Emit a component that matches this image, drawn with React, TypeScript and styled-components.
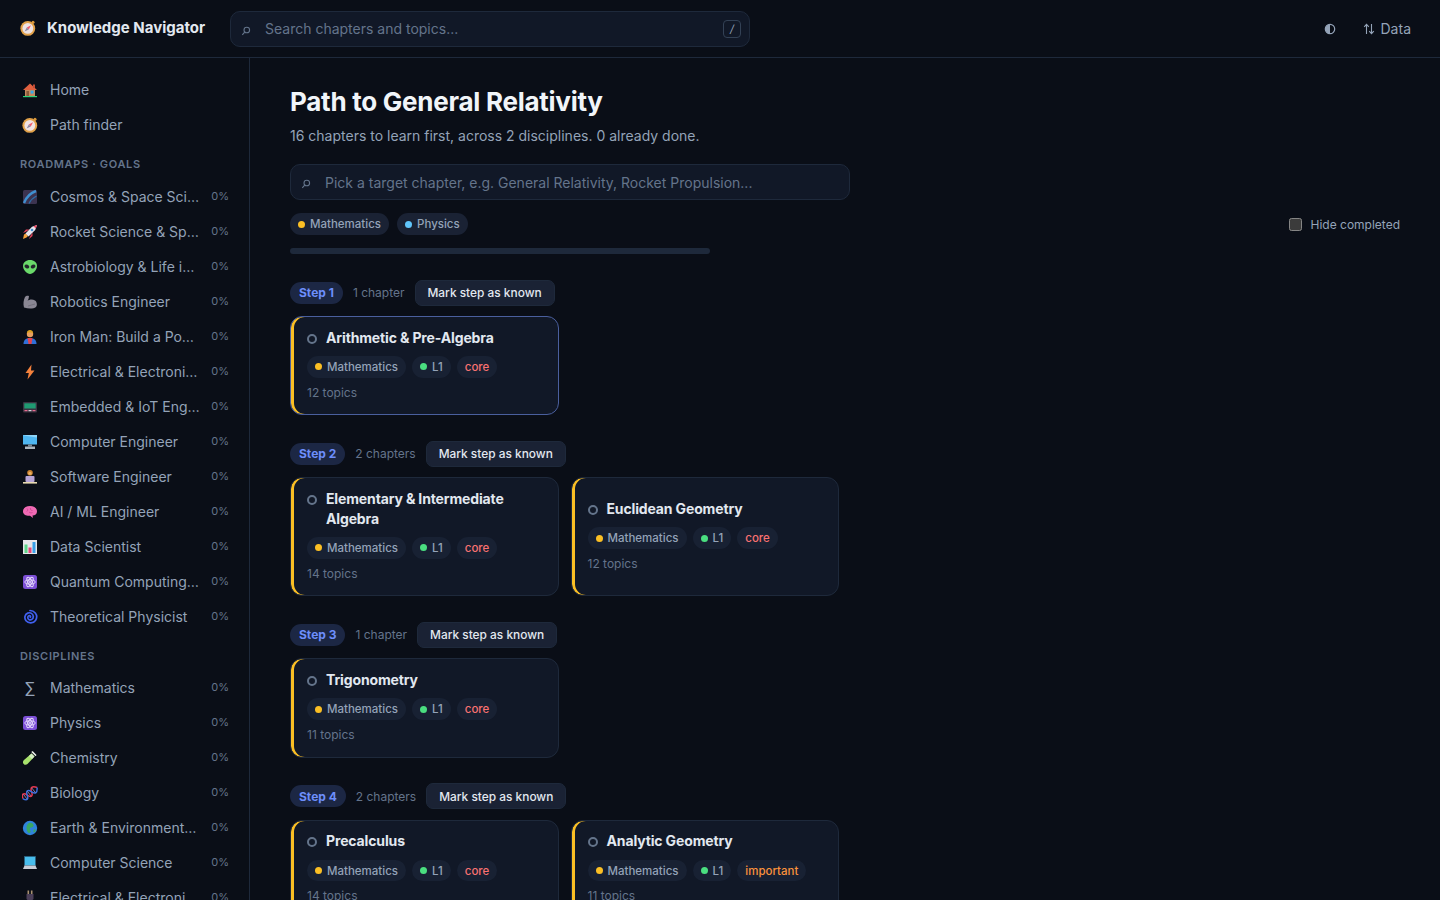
import type { ReactNode } from 'react'
import styled, { createGlobalStyle } from 'styled-components'

const Global = createGlobalStyle`
  * { box-sizing: border-box; }
  html, body { margin: 0; height: 100%; overflow: hidden; background: #0a0e17; }
  body { font-family: Inter, "Noto Sans", sans-serif; color: #e2e8f0; }
  #root { height: 100%; }
`

const Shell = styled.div`
  height: 100vh;
  display: flex;
  flex-direction: column;
  overflow: hidden;
`

const TopBar = styled.header`
  height: 58px;
  flex: none;
  display: flex;
  align-items: center;
  padding: 0 20px;
  border-bottom: 1px solid #1e293b;
`

const Brand = styled.div`
  width: 210px;
  flex: none;
  display: flex;
  align-items: center;
  gap: 11px;
  padding-bottom: 2px;
  font-size: 15px;
  font-weight: 700;
  color: #e2e8f0;
  white-space: nowrap;
`

const SearchBox = styled.label<{ $width: number }>`
  width: ${({ $width }) => $width}px;
  height: 36px;
  display: flex;
  align-items: center;
  padding: 0 8px 0 10px;
  gap: 14px;
  background: #111827;
  border: 1px solid #1e293b;
  border-radius: 10px;
`

const SearchGlyph = styled.svg`
  width: 10px;
  height: 12px;
  flex: none;
  position: relative;
  top: 2px;
`

const SearchInput = styled.input`
  flex: 1;
  min-width: 0;
  padding: 0;
  border: 0;
  outline: 0;
  background: transparent;
  font: 400 14px Inter, sans-serif;
  color: #e2e8f0;
  &::placeholder { color: #64748b; opacity: 1; }
`

const Kbd = styled.span`
  width: 18px;
  height: 18px;
  display: flex;
  align-items: center;
  justify-content: center;
  border: 1px solid #334155;
  border-radius: 4px;
  font-size: 11px;
  color: #94a3b8;
  font-style: italic;
`

const TopActions = styled.div`
  margin-left: auto;
  display: flex;
  align-items: center;
  gap: 27px;
  padding-right: 9px;
  color: #94a3b8;
  font-size: 14px;
`

const Action = styled.span`
  display: flex;
  align-items: center;
  gap: 6px;
`

const Body = styled.div`
  flex: 1;
  min-height: 0;
  display: flex;
`

const Sidebar = styled.aside`
  width: 250px;
  flex: none;
  padding: 14px 20px 0;
  border-right: 1px solid #1e293b;
  overflow: hidden;
`

const NavItem = styled.div`
  height: 35px;
  display: flex;
  align-items: center;
  font-size: 14px;
  color: #94a3b8;
`

const NavIcon = styled.span`
  width: 20px;
  height: 16px;
  margin-right: 10px;
  flex: none;
  display: flex;
  align-items: center;
  justify-content: center;
  font-size: 16px;
  line-height: 1;
  color: #94a3b8;
`

const NavName = styled.span`
  flex: 1;
  min-width: 0;
  white-space: nowrap;
  overflow: hidden;
  text-overflow: ellipsis;
`

const NavPct = styled.span`
  width: 29px;
  flex: none;
  text-align: right;
  font-size: 11px;
  color: #64748b;
  position: relative;
  top: -1px;
`

const SectionLabel = styled.div<{ $bottom: number }>`
  margin-top: 15px;
  margin-bottom: ${({ $bottom }) => $bottom}px;
  height: 14px;
  line-height: 14px;
  font-size: 11px;
  font-weight: 600;
  letter-spacing: 0.06em;
  color: #64748b;
`

const Main = styled.main`
  flex: 1;
  min-width: 0;
  padding: 27px 40px 0;
  overflow: hidden;
`

const Title = styled.h1`
  margin: 0;
  font-size: 26px;
  line-height: 34px;
  font-weight: 700;
  letter-spacing: -0.01em;
  color: #f1f5f9;
`

const Subtitle = styled.p`
  margin: 7px 0 18px;
  font-size: 14px;
  line-height: 20px;
  color: #94a3b8;
`

const FilterRow = styled.div`
  margin-top: 13px;
  height: 22px;
  display: flex;
  align-items: center;
  gap: 8px;
`

const FilterChip = styled.span`
  height: 22px;
  display: inline-flex;
  align-items: center;
  gap: 5px;
  padding: 0 8px;
  border-radius: 11px;
  background: #1a2234;
  font-size: 11.5px;
  font-weight: 500;
  color: #94a3b8;
`

const Dot = styled.i<{ $color: string }>`
  width: 7px;
  height: 7px;
  border-radius: 50%;
  flex: none;
  background: ${({ $color }) => $color};
`

const HideToggle = styled.label`
  margin-left: auto;
  display: flex;
  align-items: center;
  gap: 8px;
  font-size: 12px;
  color: #94a3b8;
`

const Check = styled.input`
  width: 13px;
  height: 13px;
  margin: 0;
  color-scheme: dark;
`

const Progress = styled.div`
  width: 420px;
  height: 6px;
  margin: 13px 0 25.6px;
  border-radius: 3px;
  background: #1e293b;
`

const StepHead = styled.div`
  height: 26px;
  display: flex;
  align-items: center;
  gap: 10px;
  margin-bottom: 10.4px;
`

const StepPill = styled.span`
  height: 22px;
  display: inline-flex;
  align-items: center;
  padding: 0 9px;
  border-radius: 11px;
  background: #1c2744;
  color: #6d8efb;
  font-size: 12px;
  font-weight: 700;
`

const StepCount = styled.span`
  font-size: 12px;
  color: #64748b;
`

const MarkButton = styled.button`
  height: 26px;
  padding: 0 12px;
  border: 1px solid #1e293b;
  border-radius: 7px;
  background: #1a2234;
  color: #e2e8f0;
  font: 500 11.9px Inter, sans-serif;
`

const CardGrid = styled.div`
  display: grid;
  grid-template-columns: repeat(2, 268.5px);
  gap: 12px;
  margin-bottom: 25.6px;
`

const Card = styled.article<{ $target?: boolean }>`
  display: flex;
  flex-direction: column;
  justify-content: center;
  padding: 10.6px 16px 13.7px;
  border: 1px solid ${({ $target }) => ($target ? '#4a5f9e' : '#1e293b')};
  border-radius: 12px;
  background: #111827;
  box-shadow: inset 3px 0 0 #fbbf24;
`

const CardTitle = styled.div`
  display: flex;
  align-items: flex-start;
  gap: 9px;
  font-size: 14px;
  line-height: 19.6px;
  font-weight: 700;
  letter-spacing: -0.01em;
  color: #e2e8f0;
`

const Ring = styled.i`
  width: 10px;
  height: 10px;
  margin-top: 6px;
  flex: none;
  border-radius: 50%;
  border: 2px solid #64748b;
`

const Tags = styled.div`
  display: flex;
  gap: 6px;
  margin-top: 9px;
`

const Tag = styled.span<{ $color?: string }>`
  height: 21.5px;
  display: inline-flex;
  align-items: center;
  gap: 5px;
  padding: 0 8px;
  border-radius: 11px;
  background: #182133;
  font-size: 11.5px;
  font-weight: 500;
  color: ${({ $color }) => $color ?? '#94a3b8'};
`

const Topics = styled.div`
  margin-top: 7px;
  font-size: 12px;
  line-height: 16px;
  color: #64748b;
`

const Icon = ({ children }: { children: ReactNode }) => (
  <svg width={16} height={16} viewBox="0 0 16 16">
    {children}
  </svg>
)

const atom = (
  <Icon>
    <rect x="1" y="1" width="14" height="14" rx="2.5" fill="#7c4fd6" />
    <g fill="none" stroke="#e6dcfa" strokeWidth="0.9">
      <ellipse cx="8" cy="8" rx="5.2" ry="2.1" />
      <ellipse cx="8" cy="8" rx="5.2" ry="2.1" transform="rotate(60 8 8)" />
      <ellipse cx="8" cy="8" rx="5.2" ry="2.1" transform="rotate(120 8 8)" />
    </g>
    <circle cx="8" cy="8" r="1" fill="#e6dcfa" />
  </Icon>
)

const compass = (
  <Icon>
    <circle cx="13" cy="2.2" r="1.5" fill="#d9973a" />
    <circle cx="7.8" cy="8.4" r="7.4" fill="#e2a24a" />
    <circle cx="7.8" cy="8.4" r="5.4" fill="#efe3e4" />
    <path d="M11 5.2 6.800 7.400 8.800 9.400Z" fill="#ef5a6a" />
    <path d="M4.600 11.600 6.800 7.400 8.800 9.400Z" fill="#8d86a0" />
  </Icon>
)

const emoji: Record<string, ReactNode> = {
  compass,
  atom,
  home: (
    <Icon>
      <path d="M3 7.500h10V14H3Z" fill="#c58a5e" />
      <path d="M8 1.500 15 8H1Z" fill="#e0603f" />
      <rect x="11" y="2.500" width="2" height="3.500" fill="#c04a35" />
      <rect x="8.600" y="8.600" width="3" height="3" fill="#38a9e8" />
      <rect x="4.400" y="9" width="2.600" height="5" fill="#8a5a3a" />
      <rect x="1" y="14" width="14" height="1.200" fill="#2fd37a" />
    </Icon>
  ),
  cosmos: (
    <Icon>
      <rect x="1" y="1" width="14" height="14" rx="1.500" fill="#3c3350" />
      <path d="M2 14C4 9 8 4 14 2" stroke="#3f8fd0" strokeWidth="2.400" fill="none" />
      <path d="M7 14.500c1.500-3 3.500-5.500 7.500-7.500" stroke="#2d6da8" strokeWidth="1.300" fill="none" />
    </Icon>
  ),
  rocket: (
    <Icon>
      <path d="M4 9.500 2 10.500 1 15l3.500-1.500L6 12Z" fill="#f5a23c" />
      <path d="M3.500 8 1 9 4 5.500h3.500Z" fill="#e0435a" />
      <path d="M8 12.500 7 15 10.500 12V8.500Z" fill="#e0435a" />
      <path d="M3.500 9.500 10 2.800 15 1l-1.800 5L6.500 12.500Z" fill="#e9e5ee" />
      <path d="M11.500 2.200 15 1l-1.200 3.500Z" fill="#ef4560" />
      <circle cx="10" cy="6" r="1.300" fill="#3f8fd0" />
    </Icon>
  ),
  alien: (
    <Icon>
      <path d="M8 1c4 0 7 2.500 7 6 0 4-4 8-7 8s-7-4-7-8c0-3.500 3-6 7-6Z" fill="#6ad96a" />
      <ellipse cx="4.900" cy="7.500" rx="2.500" ry="1.800" transform="rotate(25 4.900 7.500)" fill="#23252c" />
      <ellipse cx="11.100" cy="7.500" rx="2.500" ry="1.800" transform="rotate(-25 11.100 7.500)" fill="#23252c" />
    </Icon>
  ),
  muscle: (
    <Icon>
      <path d="M3 3c1-1.200 3-1.500 4-.8L6.500 5 5.500 7c1.500-1.500 5-2 7.500-.5 2 1.300 2.500 5 1 6.500-2.500 2-8 1.800-12 .5C1 10 1.500 6 3 3Z" fill="#8a8794" />
      <path d="M6 12c2-1 5-1 7-2" stroke="#6c6976" strokeWidth="0.800" fill="none" />
    </Icon>
  ),
  hero: (
    <Icon>
      <path d="M1.500 15c0-4 2.500-6 6.500-6s6.500 2 6.500 6Z" fill="#2f6fd8" />
      <path d="M5.500 9h5L9.500 15h-3Z" fill="#e0434f" />
      <circle cx="8" cy="5" r="3.200" fill="#e8a060" />
      <path d="M4.800 4.500C4.800 2 6.500 1 8 1s3.200 1 3.200 3.500L9.500 3.500 6.500 3.500Z" fill="#d9a020" />
    </Icon>
  ),
  bolt: (
    <Icon>
      <path d="M9.500.5 3.500 9h3.300L5.500 15.500 12.500 6.500H9Z" fill="#f4813c" />
    </Icon>
  ),
  pager: (
    <Icon>
      <rect x="1" y="3" width="14" height="10.500" rx="1" fill="#3a3340" />
      <rect x="2.300" y="4.300" width="11.400" height="5.200" fill="#1f9a72" />
      <rect x="2.500" y="11" width="3" height="1.200" fill="#e86a90" />
      <rect x="6.500" y="11" width="3" height="1.200" fill="#d8d4de" />
      <rect x="10.500" y="11" width="3" height="1.200" fill="#e86a90" />
    </Icon>
  ),
  computer: (
    <Icon>
      <rect x="1" y="1" width="14" height="9.500" fill="#4fb6f0" />
      <path d="M1 1h14v2.500L3 1.800Z" fill="#8fd4f7" />
      <rect x="6" y="10.500" width="4" height="2" fill="#7c8894" />
      <rect x="3" y="12.500" width="10" height="2.500" fill="#aab4bc" />
    </Icon>
  ),
  coder: (
    <Icon>
      <circle cx="8" cy="3.800" r="2.800" fill="#c9802f" />
      <circle cx="8" cy="4.300" r="1.600" fill="#eab060" />
      <rect x="3.500" y="7" width="9" height="6" rx="1" fill="#b6a4d6" />
      <rect x="1" y="13" width="14" height="1.600" fill="#e8d9b0" />
    </Icon>
  ),
  brain: (
    <Icon>
      <path d="M1 7.500C1 4 4 2 8 2s7 2 7 5.500c0 2.500-2 4-4.500 4l.5 2.500-3-2.200C4 12 1 10.500 1 7.500Z" fill="#f06ab4" />
      <path d="M5 4.500c1 1 1 2-.2 3M8.500 4c-.5 1.500.5 2.500 2 2.500M7 8c1 1 2.500 1 3.500.5" stroke="#c8408e" strokeWidth="0.800" fill="none" />
    </Icon>
  ),
  chart: (
    <Icon>
      <rect x="1" y="1" width="14" height="14" fill="#e8e6ea" />
      <rect x="2.500" y="5.500" width="3" height="8.500" fill="#5fd58a" />
      <rect x="6.500" y="8.500" width="3" height="5.500" fill="#e8467a" />
      <rect x="10.500" y="3" width="3" height="11" fill="#3aa0e8" />
    </Icon>
  ),
  spiral: (
    <Icon>
      <path
        d="M8.300 8.300c.6-.9-.3-1.900-1.400-1.500-1.500.6-1.500 2.800 0 3.700 2 1.100 4.500-.5 4.400-2.900C11.200 4.700 8.400 3 5.700 4.100 2.700 5.400 2 9.200 4 11.700c2.500 3 7.300 2.800 9.500-.3 1.500-2.200 1.400-5.200-.2-7.300C12 2.400 10 1.500 8 1.500"
        stroke="#4060ee"
        strokeWidth="1.700"
        fill="none"
        strokeLinecap="round"
      />
    </Icon>
  ),
  tube: (
    <Icon>
      <path d="M9.500 3.500 12.500 6.500 5.500 14c-1.200 1-2.800 1-3.800-.1-1-1-1-2.500 0-3.600Z" fill="#a8e26c" />
      <path d="M9.500 3.500 12.500 6.500 10 9 7 6Z" fill="#d6eec4" />
      <rect x="9" y="2.800" width="6" height="1.600" rx="0.600" transform="rotate(45 12 3.600)" fill="#eef2ea" />
    </Icon>
  ),
  dna: (
    <Icon>
      <g transform="rotate(-38 8 8)" fill="none" strokeWidth="1.500">
        <path d="M-1 8C.5 3.500 3 3.500 4.500 8S8.500 12.500 10 8 14 3.500 17 8" stroke="#e8374f" />
        <path d="M-1 8C.5 12.500 3 12.500 4.500 8S8.500 3.500 10 8 14 12.500 17 8" stroke="#3a6fe0" />
        <path d="M2 5v6M7 5v6M12.500 5v6" stroke="#9a8ab8" strokeWidth="0.800" />
      </g>
    </Icon>
  ),
  earth: (
    <Icon>
      <circle cx="8" cy="8" r="7.200" fill="#2f83dc" />
      <path d="M7 3c2-.5 4 .5 4.500 2s-1 2.500-2.500 2.500S7.500 9.500 8.500 11 7 13.500 6 12.500 4.500 9 4.500 7.500 5.500 3.500 7 3Z" fill="#3aa860" />
      <path d="M12 9.500c1-.5 2 0 1.500 1.500s-1.500 1.500-2 1 0-2 .5-2.500Z" fill="#3aa860" />
    </Icon>
  ),
  laptop: (
    <Icon>
      <rect x="2.500" y="1.500" width="11" height="9" fill="#48bdec" stroke="#2a5f80" strokeWidth="0.600" />
      <path d="M2.500 10.500h11L15 14H1Z" fill="#c9cdd6" />
    </Icon>
  ),
  plug: (
    <Icon>
      <rect x="5.500" y="0.500" width="1.600" height="4" fill="#a89070" />
      <rect x="8.900" y="0.500" width="1.600" height="4" fill="#a89070" />
      <path d="M4.500 4h7v5L9.500 11h-3L4.500 9Z" fill="#4b3f58" />
      <rect x="7" y="11" width="2" height="5" fill="#3a3040" />
    </Icon>
  ),
}

const roadmaps = [
  ['cosmos', 'Cosmos & Space Science'],
  ['rocket', 'Rocket Science & Spaceflight'],
  ['alien', 'Astrobiology & Life in the Universe'],
  ['muscle', 'Robotics Engineer'],
  ['hero', 'Iron Man: Build a Powered Suit'],
  ['bolt', 'Electrical & Electronics Engineer'],
  ['pager', 'Embedded & IoT Engineer'],
  ['computer', 'Computer Engineer'],
  ['coder', 'Software Engineer'],
  ['brain', 'AI / ML Engineer'],
  ['chart', 'Data Scientist'],
  ['atom', 'Quantum Computing Engineer'],
  ['spiral', 'Theoretical Physicist'],
]

const disciplines = [
  ['sigma', 'Mathematics'],
  ['atom', 'Physics'],
  ['tube', 'Chemistry'],
  ['dna', 'Biology'],
  ['earth', 'Earth & Environmental Science'],
  ['laptop', 'Computer Science'],
  ['plug', 'Electrical & Electronics'],
]

type Chapter = { title: string; topics: number; weight: 'core' | 'important'; target?: boolean }

const steps: { label: string; count: string; chapters: Chapter[] }[] = [
  { label: 'Step 1', count: '1 chapter', chapters: [{ title: 'Arithmetic & Pre-Algebra', topics: 12, weight: 'core', target: true }] },
  {
    label: 'Step 2',
    count: '2 chapters',
    chapters: [
      { title: 'Elementary & Intermediate Algebra', topics: 14, weight: 'core' },
      { title: 'Euclidean Geometry', topics: 12, weight: 'core' },
    ],
  },
  { label: 'Step 3', count: '1 chapter', chapters: [{ title: 'Trigonometry', topics: 11, weight: 'core' }] },
  {
    label: 'Step 4',
    count: '2 chapters',
    chapters: [
      { title: 'Precalculus', topics: 14, weight: 'core' },
      { title: 'Analytic Geometry', topics: 11, weight: 'important' },
    ],
  },
]

const NavRow = ({ icon, name, pct }: { icon: string; name: string; pct?: boolean }) => (
  <NavItem>
    <NavIcon>{icon === 'sigma' ? '∑' : emoji[icon]}</NavIcon>
    <NavName>{name}</NavName>
    {pct && <NavPct>0%</NavPct>}
  </NavItem>
)

const Lens = () => (
  <SearchGlyph viewBox="0 0 10 12">
    <circle cx="5.800" cy="5" r="2.800" fill="none" stroke="#64748b" strokeWidth="1.100" />
    <path d="M3.700 7.200 1.300 9.800" stroke="#64748b" strokeWidth="1.200" />
  </SearchGlyph>
)

export default function App() {
  return (
    <Shell>
      <Global />
      <TopBar>
        <Brand>
          {compass}
          Knowledge Navigator
        </Brand>
        <SearchBox $width={520}>
          <Lens />
          <SearchInput placeholder="Search chapters and topics..." />
          <Kbd>/</Kbd>
        </SearchBox>
        <TopActions>
          <Action>
            <svg width="12" height="12" viewBox="0 0 12 12">
              <circle cx="6" cy="6" r="4.700" fill="none" stroke="#94a3b8" strokeWidth="1.200" />
              <path d="M6 1.300a4.700 4.700 0 0 0 0 9.400Z" fill="#94a3b8" />
            </svg>
          </Action>
          <Action>
            <svg width="12" height="12" viewBox="0 0 12 12" fill="none" stroke="#94a3b8" strokeWidth="1.100">
              <path d="M3.500 11V1.500M1.200 3.800 3.500 1.300l2.300 2.500M8.500 1v9.500M6.200 8.200l2.300 2.500 2.300-2.500" />
            </svg>
            Data
          </Action>
        </TopActions>
      </TopBar>
      <Body>
        <Sidebar>
          <NavRow icon="home" name="Home" />
          <NavRow icon="compass" name="Path finder" />
          <SectionLabel $bottom={8}>ROADMAPS · GOALS</SectionLabel>
          {roadmaps.map(([icon, name]) => (
            <NavRow key={name} icon={icon} name={name} pct />
          ))}
          <SectionLabel $bottom={7}>DISCIPLINES</SectionLabel>
          {disciplines.map(([icon, name]) => (
            <NavRow key={name} icon={icon} name={name} pct />
          ))}
        </Sidebar>
        <Main>
          <Title>Path to General Relativity</Title>
          <Subtitle>16 chapters to learn first, across 2 disciplines. 0 already done.</Subtitle>
          <SearchBox $width={560}>
            <Lens />
            <SearchInput placeholder="Pick a target chapter, e.g. General Relativity, Rocket Propulsion..." />
          </SearchBox>
          <FilterRow>
            <FilterChip>
              <Dot $color="#fbbf24" />
              Mathematics
            </FilterChip>
            <FilterChip>
              <Dot $color="#60c5fa" />
              Physics
            </FilterChip>
            <HideToggle>
              <Check type="checkbox" />
              Hide completed
            </HideToggle>
          </FilterRow>
          <Progress />
          {steps.map(step => (
            <section key={step.label}>
              <StepHead>
                <StepPill>{step.label}</StepPill>
                <StepCount>{step.count}</StepCount>
                <MarkButton>Mark step as known</MarkButton>
              </StepHead>
              <CardGrid>
                {step.chapters.map(ch => (
                  <Card key={ch.title} $target={ch.target}>
                    <CardTitle>
                      <Ring />
                      {ch.title}
                    </CardTitle>
                    <Tags>
                      <Tag>
                        <Dot $color="#fbbf24" />
                        Mathematics
                      </Tag>
                      <Tag>
                        <Dot $color="#4ade80" />
                        L1
                      </Tag>
                      <Tag $color={ch.weight === 'core' ? '#f87171' : '#fb923c'}>{ch.weight}</Tag>
                    </Tags>
                    <Topics>{ch.topics} topics</Topics>
                  </Card>
                ))}
              </CardGrid>
            </section>
          ))}
        </Main>
      </Body>
    </Shell>
  )
}
